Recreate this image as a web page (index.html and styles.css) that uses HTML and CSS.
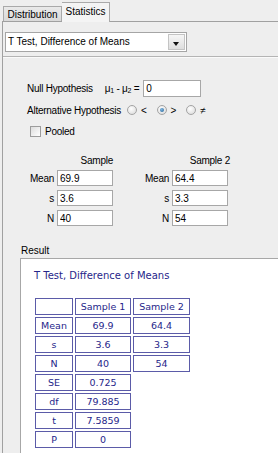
FILE: index.html
```html
<!DOCTYPE html>
<html>
    <head>
        <title>T Test, Difference of Means</title>
        <link rel="stylesheet" href="styles.css">
    </head>
    <body>
        <div class="tabs">
            <div class="tab">Distribution</div>
            <div class="tab active">Statistics</div>
        </div>

        <div class="panel">
            <div class="combo">
                <span class="comboText">T Test, Difference of Means</span>
                <span class="comboArrow"></span>
            </div>

            <div class="separator"></div>

            <div class="form">
                <div class="row nullRow">
                    <span class="rowLabel">Null Hypothesis</span>
                    <span class="mu">&mu;<sub>1</sub> - &mu;<sub>2</sub> =</span>
                    <input class="field nullField" type="text" value="0">
                </div>

                <div class="row altRow">
                    <span class="rowLabel">Alternative Hypothesis</span>
                    <span class="radio"></span><span class="sym">&lt;</span>
                    <span class="radio checked"></span><span class="sym">&gt;</span>
                    <span class="radio"></span><span class="sym">&ne;</span>
                </div>

                <div class="row pooledRow">
                    <span class="checkbox"></span>
                    <span>Pooled</span>
                </div>

                <table class="samples">
                    <colgroup>
                        <col class="labelCol1">
                        <col class="inputCol">
                        <col class="labelCol2">
                        <col class="inputCol">
                    </colgroup>
                    <tr class="headRow">
                        <td></td><td class="head">Sample</td>
                        <td></td><td class="head second">Sample 2</td>
                    </tr>
                    <tr>
                        <td class="lbl">Mean</td><td><input class="field" type="text" value="69.9"></td>
                        <td class="lbl">Mean</td><td><input class="field" type="text" value="64.4"></td>
                    </tr>
                    <tr>
                        <td class="lbl">s</td><td><input class="field" type="text" value="3.6"></td>
                        <td class="lbl">s</td><td><input class="field" type="text" value="3.3"></td>
                    </tr>
                    <tr>
                        <td class="lbl">N</td><td><input class="field" type="text" value="40"></td>
                        <td class="lbl">N</td><td><input class="field" type="text" value="54"></td>
                    </tr>
                </table>
            </div>

            <div class="resultLabel">Result</div>
            <div class="resultBox">
                <div class="resultTitle">T Test, Difference of Means</div>
                <table class="resultTable">
                    <tr><td></td><td>Sample 1</td><td>Sample 2</td></tr>
                    <tr><td>Mean</td><td>69.9</td><td>64.4</td></tr>
                    <tr><td>s</td><td>3.6</td><td>3.3</td></tr>
                    <tr><td>N</td><td>40</td><td>54</td></tr>
                    <tr><td>SE</td><td>0.725</td></tr>
                    <tr><td>df</td><td>79.885</td></tr>
                    <tr><td>t</td><td>7.5859</td></tr>
                    <tr><td>P</td><td>0</td></tr>
                </table>
            </div>
        </div>
    </body>
</html>
```

FILE: styles.css
```css
body {
    margin: 0;
    background-color: #eeeeee;
    font-family: "Liberation Sans", Arial, sans-serif;
    font-size: 10px;
    color: #000000;
    overflow: hidden;
}

/* tab strip */
.tabs {
    display: flex;
    align-items: flex-end;
    height: 21px;
    padding-left: 3px;
}

.tab {
    box-sizing: border-box;
    height: 15px;
    width: 59px;
    padding-top: 2px;
    text-align: center;
    border: 1px solid #a9a9a9;
    border-bottom: none;
    background: linear-gradient(#e9e9e9, #d9d9d9);
}

.tab.active {
    height: 20px;
    width: 48px;
    padding-top: 3px;
    margin-bottom: -1px;
    position: relative;
    background: #f4f4f4;
    border-left: none;
}

/* main panel */
.panel {
    margin-left: 2px;
    border-top: 1px solid #a0a0a0;
    border-left: 1px solid #a0a0a0;
    height: 432px;
}

.combo {
    display: flex;
    box-sizing: border-box;
    margin: 10px 0 0 2px;
    width: 182px;
    height: 20px;
    border: 1px solid #a5a5a5;
    background-color: #ffffff;
}

.comboText {
    flex: 1;
    padding: 3px 0 0 2px;
}

.comboArrow {
    width: 15px;
    margin: 1px;
    border: 1px solid #c4c4c4;
    background: linear-gradient(#f6f6f6, #dedede);
    position: relative;
}

.comboArrow::after {
    content: "";
    position: absolute;
    left: 4px;
    top: 7px;
    border-left: 3px solid transparent;
    border-right: 3px solid transparent;
    border-top: 4px solid #111111;
}

.separator {
    margin-top: 4px;
    border-top: 1px solid #b4b4b4;
    border-bottom: 1px solid #fafafa;
}

.form {
    letter-spacing: -0.25px;
}

.row {
    display: flex;
    align-items: center;
    padding-left: 24px;
}

.nullRow {
    margin-top: 22px;
    height: 17px;
}

.mu {
    margin-left: 12px;
    margin-right: 4px;
}

.mu sub {
    font-size: 7px;
    vertical-align: -1px;
}

.field {
    box-sizing: border-box;
    font-family: "Liberation Sans", Arial, sans-serif;
    font-size: 10px;
    letter-spacing: 0;
    border: 1px solid #a7a7a7;
    background-color: #ffffff;
    padding: 0 0 0 2px;
    margin: 0;
    outline: none;
}

.nullField {
    width: 58px;
    height: 17px;
}

.altRow {
    margin-top: 5px;
    height: 16px;
}

.altRow .rowLabel {
    margin-right: 6px;
}

.radio {
    box-sizing: border-box;
    width: 10px;
    height: 10px;
    border-radius: 50%;
    border: 1px solid #a4a4a4;
    background: radial-gradient(circle at 40% 35%, #ffffff, #d6d6d6);
    position: relative;
}

.radio.checked::after {
    content: "";
    position: absolute;
    left: 2px;
    top: 2px;
    width: 4px;
    height: 4px;
    border-radius: 50%;
    background: radial-gradient(circle at 40% 35%, #7fb6e0, #1f5f94);
}

.sym {
    margin-left: 4px;
    margin-right: 10px;
}

.pooledRow {
    margin-top: 6px;
    height: 14px;
    padding-left: 27px;
}

.checkbox {
    box-sizing: border-box;
    width: 11px;
    height: 11px;
    margin-right: 4px;
    border: 1px solid #9c9c9c;
    background: linear-gradient(135deg, #dcdcdc, #ffffff);
}

/* sample inputs */
.samples {
    table-layout: fixed;
    width: 225px;
    border-spacing: 0 4px;
    margin-top: 12px;
}

.samples td {
    padding: 0;
    height: 16px;
}

.samples .headRow td {
    height: 12px;
}

.labelCol1 {
    width: 54px;
}

.labelCol2 {
    width: 59px;
}

.inputCol {
    width: 56px;
}

.samples .lbl {
    text-align: right;
    padding-right: 3px;
}

.samples .head {
    text-align: right;
    white-space: nowrap;
}

.samples .head.second {
    position: relative;
    left: 2px;
}

.samples .field {
    display: block;
    width: 56px;
    height: 16px;
}

/* result */
.resultLabel {
    margin: 15px 0 0 18px;
    height: 12px;
}

.resultBox {
    margin: 1px 0 0 17px;
    border: 1px solid #a7a7a7;
    border-right: none;
    background-color: #ffffff;
    height: 200px;
    font-family: "DejaVu Sans", Verdana, sans-serif;
    color: #26268a;
}

.resultTitle {
    padding: 11px 0 0 13px;
    font-size: 10px;
    line-height: 12px;
}

.resultTable {
    margin: 14px 0 0 12px;
    border-spacing: 2px;
    font-size: 9.5px;
}

.resultTable td {
    box-sizing: border-box;
    height: 17px;
    padding: 0;
    text-align: center;
    border: 1px solid #5b5ba8;
}

.resultTable td:nth-child(1) {
    width: 38px;
}

.resultTable td:nth-child(2) {
    width: 56px;
}

.resultTable td:nth-child(3) {
    width: 57px;
}
```
